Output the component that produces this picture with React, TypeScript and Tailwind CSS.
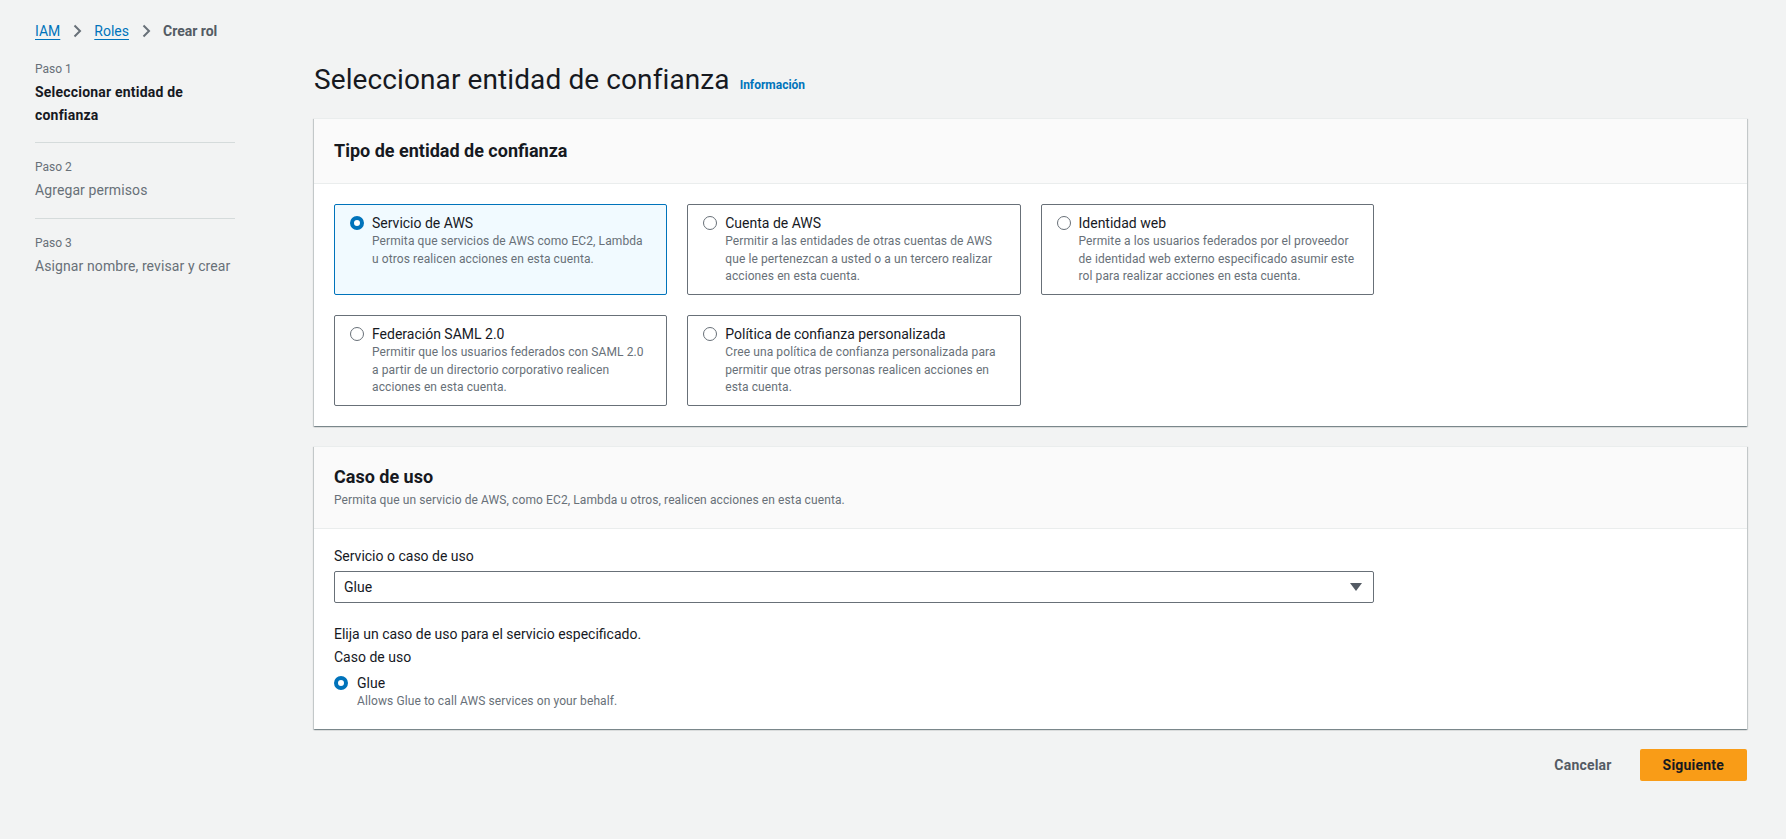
import React from "react";

type Option = {
  id: string;
  title: string;
  desc: string;
};

// descriptions keep the line breaks of the console
const options: Option[] = [
  {
    id: "aws",
    title: "Servicio de AWS",
    desc: "Permita que servicios de AWS como EC2, Lambda\nu otros realicen acciones en esta cuenta.",
  },
  {
    id: "account",
    title: "Cuenta de AWS",
    desc: "Permitir a las entidades de otras cuentas de AWS\nque le pertenezcan a usted o a un tercero realizar\nacciones en esta cuenta.",
  },
  {
    id: "web",
    title: "Identidad web",
    desc: "Permite a los usuarios federados por el proveedor\nde identidad web externo especificado asumir este\nrol para realizar acciones en esta cuenta.",
  },
  {
    id: "saml",
    title: "Federación SAML 2.0",
    desc: "Permitir que los usuarios federados con SAML 2.0\na partir de un directorio corporativo realicen\nacciones en esta cuenta.",
  },
  {
    id: "custom",
    title: "Política de confianza personalizada",
    desc: "Cree una política de confianza personalizada para\npermitir que otras personas realicen acciones en\nesta cuenta.",
  },
];

const steps = [
  { label: "Paso 1", title: "Seleccionar entidad de confianza", active: true },
  { label: "Paso 2", title: "Agregar permisos", active: false },
  { label: "Paso 3", title: "Asignar nombre, revisar y crear", active: false },
];

function Radio({ checked }: { checked: boolean }) {
  return checked ? (
    <span className="block w-[14px] h-[14px] shrink-0 rounded-full border-[4px] border-[#0073bb] bg-white" />
  ) : (
    <span className="block w-[14px] h-[14px] shrink-0 rounded-full border border-[#687078] bg-white" />
  );
}

function Chevron() {
  return (
    <svg width="10" height="14" viewBox="0 0 10 14" className="mx-[12px]">
      <path d="M2.5 1.5 8 7l-5.5 5.5" fill="none" stroke="#687078" strokeWidth="2" />
    </svg>
  );
}

const panelShadow =
  "bg-white border-t border-[#eaeded] shadow-[0_1px_1px_0_rgba(0,28,36,0.3),1px_1px_1px_0_rgba(0,28,36,0.15),-1px_1px_1px_0_rgba(0,28,36,0.15)]";

export default function App() {
  const selected = "aws";

  return (
    <div className="min-h-[839px] bg-[#f2f3f3] pl-[35px] pr-[39px] pt-[21px] font-['Roboto',sans-serif] text-[#16191f]">
      {/* breadcrumb */}
      <nav className="flex items-center text-[14px] leading-[20px]">
        <a className="text-[#0073bb] underline underline-offset-[3px]">IAM</a>
        <Chevron />
        <a className="text-[#0073bb] underline underline-offset-[3px]">Roles</a>
        <Chevron />
        <span className="font-bold text-[#545b64]">Crear rol</span>
      </nav>

      <div className="flex mt-[20px]">
        {/* steps */}
        <aside className="w-[200px] shrink-0">
          {steps.map((s, i) => (
            <div
              key={s.label}
              className={
                i === 0
                  ? "pb-[15px] border-b border-[#d5dbdb]"
                  : i === 1
                  ? "pt-[16px] pb-[16px] border-b border-[#d5dbdb]"
                  : "pt-[16px]"
              }
            >
              <div className="text-[12px] leading-[16px] text-[#687078]">{s.label}</div>
              <div
                className={
                  s.active
                    ? "mt-[4px] text-[14px] leading-[23px] font-bold text-[#16191f] pr-4 tracking-[0.2px]"
                    : "mt-[4px] text-[14px] leading-[23px] text-[#687078] tracking-[0.1px]"
                }
              >
                {s.title}
              </div>
            </div>
          ))}
        </aside>

        {/* main */}
        <main className="flex-1 ml-[79px]">
          <div className="flex items-baseline gap-[10px] mt-[1px]">
            <h1 className="text-[28px] leading-[36px] font-normal text-[#16191f] tracking-[0.1px]">
              Seleccionar entidad de confianza
            </h1>
            <a className="text-[12px] font-bold text-[#0073bb]">Información</a>
          </div>

          {/* trusted entity type */}
          <section className={"mt-[20px] " + panelShadow}>
            <div className="bg-[#fafafa] border-b border-[#eaeded] px-[20px] py-[20px]">
              <h2 className="text-[18px] leading-[24px] font-bold">Tipo de entidad de confianza</h2>
            </div>
            <div className="p-[20px] grid grid-cols-4 gap-x-[20px] gap-y-[20px]">
              {options.map((o, i) => {
                const on = o.id === selected;
                return (
                  <div
                    key={o.id}
                    className={
                      (i === 3 ? "col-start-1 " : "") +
                      (on
                        ? "border border-[#0073bb] bg-[#f1faff] rounded-[2px] px-[15px] pt-[8px] pb-[8px] min-h-[91px]"
                        : "border border-[#687078] bg-white rounded-[2px] px-[15px] pt-[8px] pb-[8px] min-h-[91px]")
                    }
                  >
                    <div className="flex items-center gap-[8px]">
                      <Radio checked={on} />
                      <span className="text-[14px] leading-[20px]">{o.title}</span>
                    </div>
                    <p className="pl-[22px] text-[12px] leading-[17.5px] text-[#687078] whitespace-pre-line tracking-[0.1px]">
                      {o.desc}
                    </p>
                  </div>
                );
              })}
            </div>
          </section>

          {/* use case */}
          <section className={"mt-[20px] " + panelShadow}>
            <div className="bg-[#fafafa] border-b border-[#eaeded] px-[20px] pt-[18px] pb-[20px]">
              <h2 className="text-[18px] leading-[24px] font-bold">Caso de uso</h2>
              <p className="mt-[3px] text-[12px] leading-[16px] text-[#687078] tracking-[0.1px]">
                Permita que un servicio de AWS, como EC2, Lambda u otros, realicen acciones en esta cuenta.
              </p>
            </div>
            <div className="px-[20px] pt-[17px] pb-[20px]">
              <div className="grid grid-cols-4 gap-x-[20px]">
                <div className="col-span-3">
                  <label className="block text-[14px] leading-[20px]">Servicio o caso de uso</label>
                  <div className="mt-[5px] h-[32px] flex items-center justify-between border border-[#687078] rounded-[2px] bg-white pl-[9px] pr-[11px]">
                    <span className="text-[14px]">Glue</span>
                    <svg width="12" height="8" viewBox="0 0 12 8">
                      <path d="M0 0h12L6 8z" fill="#545b64" />
                    </svg>
                  </div>
                </div>
              </div>

              <p className="mt-[21px] text-[14px] leading-[20px]">Elija un caso de uso para el servicio especificado.</p>
              <p className="mt-[3px] text-[14px] leading-[20px]">Caso de uso</p>
              <div className="mt-[6px] flex items-center gap-[9px]">
                <Radio checked />
                <span className="text-[14px] leading-[20px]">Glue</span>
              </div>
              <p className="pl-[23px] text-[12px] leading-[16px] text-[#687078] tracking-[0.1px]">
                Allows Glue to call AWS services on your behalf.
              </p>
            </div>
          </section>

          <div className="mt-[20px] flex justify-end items-center gap-[8px]">
            <button className="px-[20px] h-[32px] text-[14px] font-bold text-[#545b64] tracking-[0.2px]">
              Cancelar
            </button>
            <button className="px-[23px] h-[32px] rounded-[2px] bg-[#f99c17] text-[14px] font-bold text-[#16191f] tracking-[0.2px]">
              Siguiente
            </button>
          </div>
        </main>
      </div>
    </div>
  );
}
